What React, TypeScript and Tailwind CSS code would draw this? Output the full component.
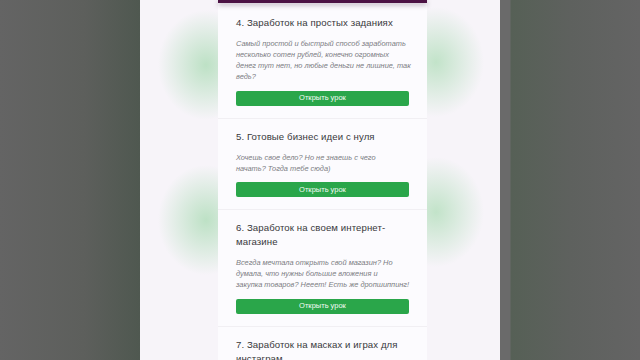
import React from 'react';

const LESSONS = [
  {
    id: 4,
    title: '4. Заработок на простых заданиях',
    lines: [
      'Самый простой и быстрый способ заработать',
      'несколько сотен рублей, конечно огромных',
      'денег тут нет, но любые деньги не лишние, так',
      'ведь?',
    ],
  },
  {
    id: 5,
    title: '5. Готовые бизнес идеи с нуля',
    lines: ['Хочешь свое дело? Но не знаешь с чего', 'начать? Тогда тебе сюда)'],
  },
  {
    id: 6,
    title: '6. Заработок на своем интернет-магазине',
    lines: [
      'Всегда мечтала открыть свой магазин? Но',
      'думала, что нужны большие вложения и',
      'закупка товаров? Нееет! Есть же дропшиппинг!',
    ],
  },
  {
    id: 7,
    title: '7. Заработок на масках и играх для инстаграм',
    lines: [] as string[],
  },
];

export default function App() {
  return (
    <div className="flex h-[360px] w-[640px] overflow-hidden font-['Liberation_Sans',Arial,sans-serif]">
      <div className="w-[140px] shrink-0 bg-[linear-gradient(to_right,#646464,#5d5f5c_60%,#4f5850)]" />

      {/* phone screen */}
      <div className="flex w-[360px] shrink-0 bg-[#f7f4f9] bg-[radial-gradient(ellipse_48px_55px_at_66px_65px,#bde1c5,transparent),radial-gradient(ellipse_48px_55px_at_66px_220px,#bde1c5,transparent),radial-gradient(ellipse_48px_55px_at_296px_62px,#c2e3c9,transparent),radial-gradient(ellipse_48px_55px_at_296px_212px,#c2e3c9,transparent)]">
        <div className="ml-[78px] w-[209px] bg-[#fcfbfe]">
          <div className="h-[3px] bg-[#4c1244] shadow-[0_2px_5px_rgba(40,0,40,0.35)]" />
          <div className="pt-[2px]">
            {LESSONS.map((lesson) => (
              <div key={lesson.id} className="border-b border-[#f1eff3] px-[18px] pt-[11px] pb-[12px]">
                <h3 className="text-[9.6px] leading-[14px] tracking-[0.1px] text-[#38383b]">{lesson.title}</h3>
                {lesson.lines.length > 0 && (
                  <>
                    <p className="mt-[8px] text-[7.4px] italic leading-[11px] text-[#7b7b82]">
                      {lesson.lines.map((line) => (
                        <span key={line} className="block whitespace-nowrap">
                          {line}
                        </span>
                      ))}
                    </p>
                    <button className="mt-[8.5px] flex h-[15px] w-full items-center justify-center rounded-[2px] bg-[#2aa64a] text-[7.5px] font-light text-[#f4fbf5]">
                      Открыть урок
                    </button>
                  </>
                )}
              </div>
            ))}
          </div>
        </div>
      </div>

      <div className="w-[140px] shrink-0 bg-[linear-gradient(to_right,#6a6a6a_0px,#6a6a6a_10px,#566056_11px,#5e615e_50%,#646464)]" />
    </div>
  );
}
